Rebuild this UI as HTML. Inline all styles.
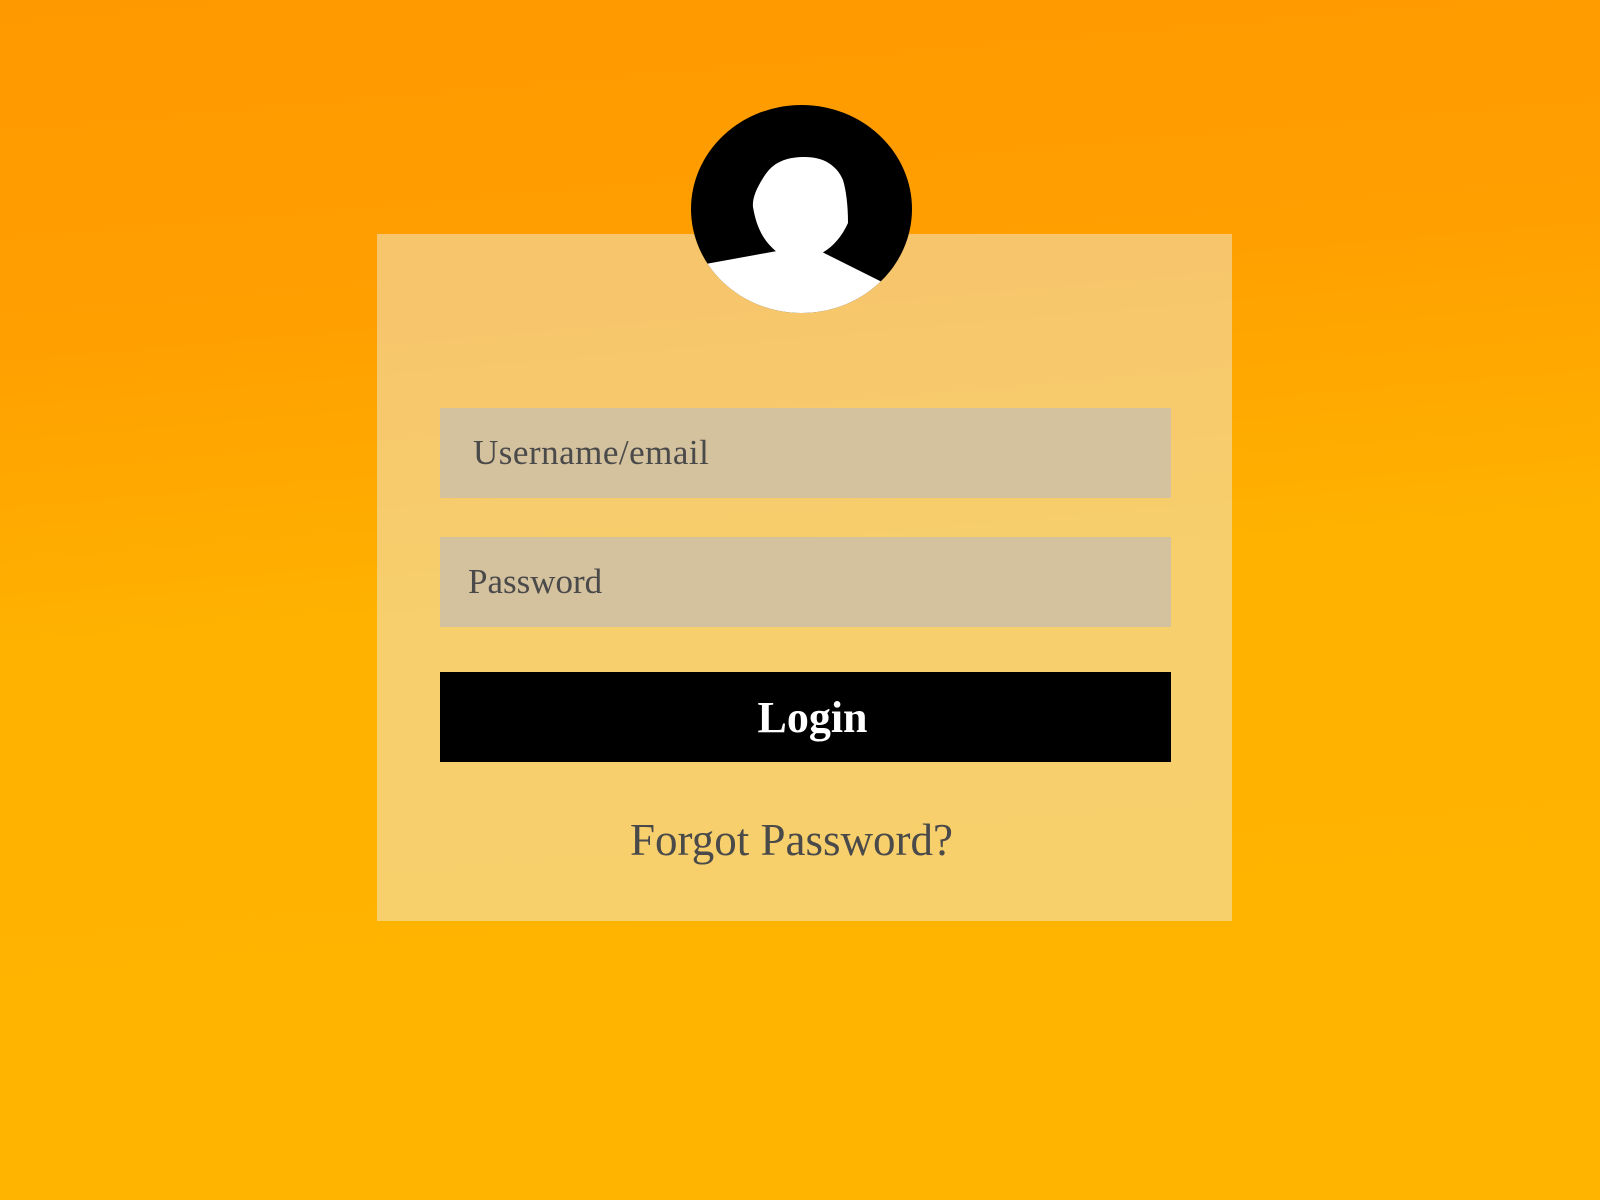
<!DOCTYPE html>
<html><head><meta charset="utf-8"><style>
html,body{margin:0;padding:0}
body{width:1600px;height:1200px;overflow:hidden;position:relative;background:linear-gradient(175deg,#ff9900 0%,#ff9f00 25%,#ffb300 50%,#ffb400 100%);font-family:"Liberation Serif",serif}
.card{position:absolute;left:377px;top:234px;width:855px;height:687px;background:rgba(240,235,215,0.5)}
.in{position:absolute;left:440px;width:731px;height:90px;background:#d4c19e;color:#4a4a4a;font-size:35px;box-sizing:border-box;line-height:90px}
.btn{position:absolute;left:440px;top:672px;width:731px;height:90px;background:#000;color:#fff;font-size:44px;font-weight:bold;text-align:center;line-height:92px;padding-left:14px;box-sizing:border-box}
.fp{position:absolute;left:0;width:1600px;text-align:center;top:814px;font-size:45px;color:#4a4a4a;padding-right:17px;box-sizing:border-box}
svg{position:absolute;left:0;top:0}
</style></head><body>
<div class="card"></div>
<div class="in" style="top:408px;padding-left:33px;letter-spacing:0.5px">Username/email</div>
<div class="in" style="top:537px;padding-left:28px">Password</div>
<div class="btn">Login</div>
<div class="fp">Forgot Password?</div>
<svg width="1600" height="400" viewBox="0 0 1600 400">
<defs><clipPath id="c"><ellipse cx="801.5" cy="209" rx="110.5" ry="104"/></clipPath></defs>
<ellipse cx="801.5" cy="209" rx="110.5" ry="104" fill="#000"/>
<g clip-path="url(#c)" fill="#fff">
<path d="M805,157 C790,157 775,160 765,175 C757,187 752,198 753,207 C756,225 762,240 777,252 L822,253 C834,246 842,236 848,223 C848,205 846,190 843,180 C836,164 822,157 805,157 Z"/>
<path d="M700,265 L777,251 L822,252 L882,282 L882,340 L700,340 Z"/>
</g>
</svg>
</body></html>
